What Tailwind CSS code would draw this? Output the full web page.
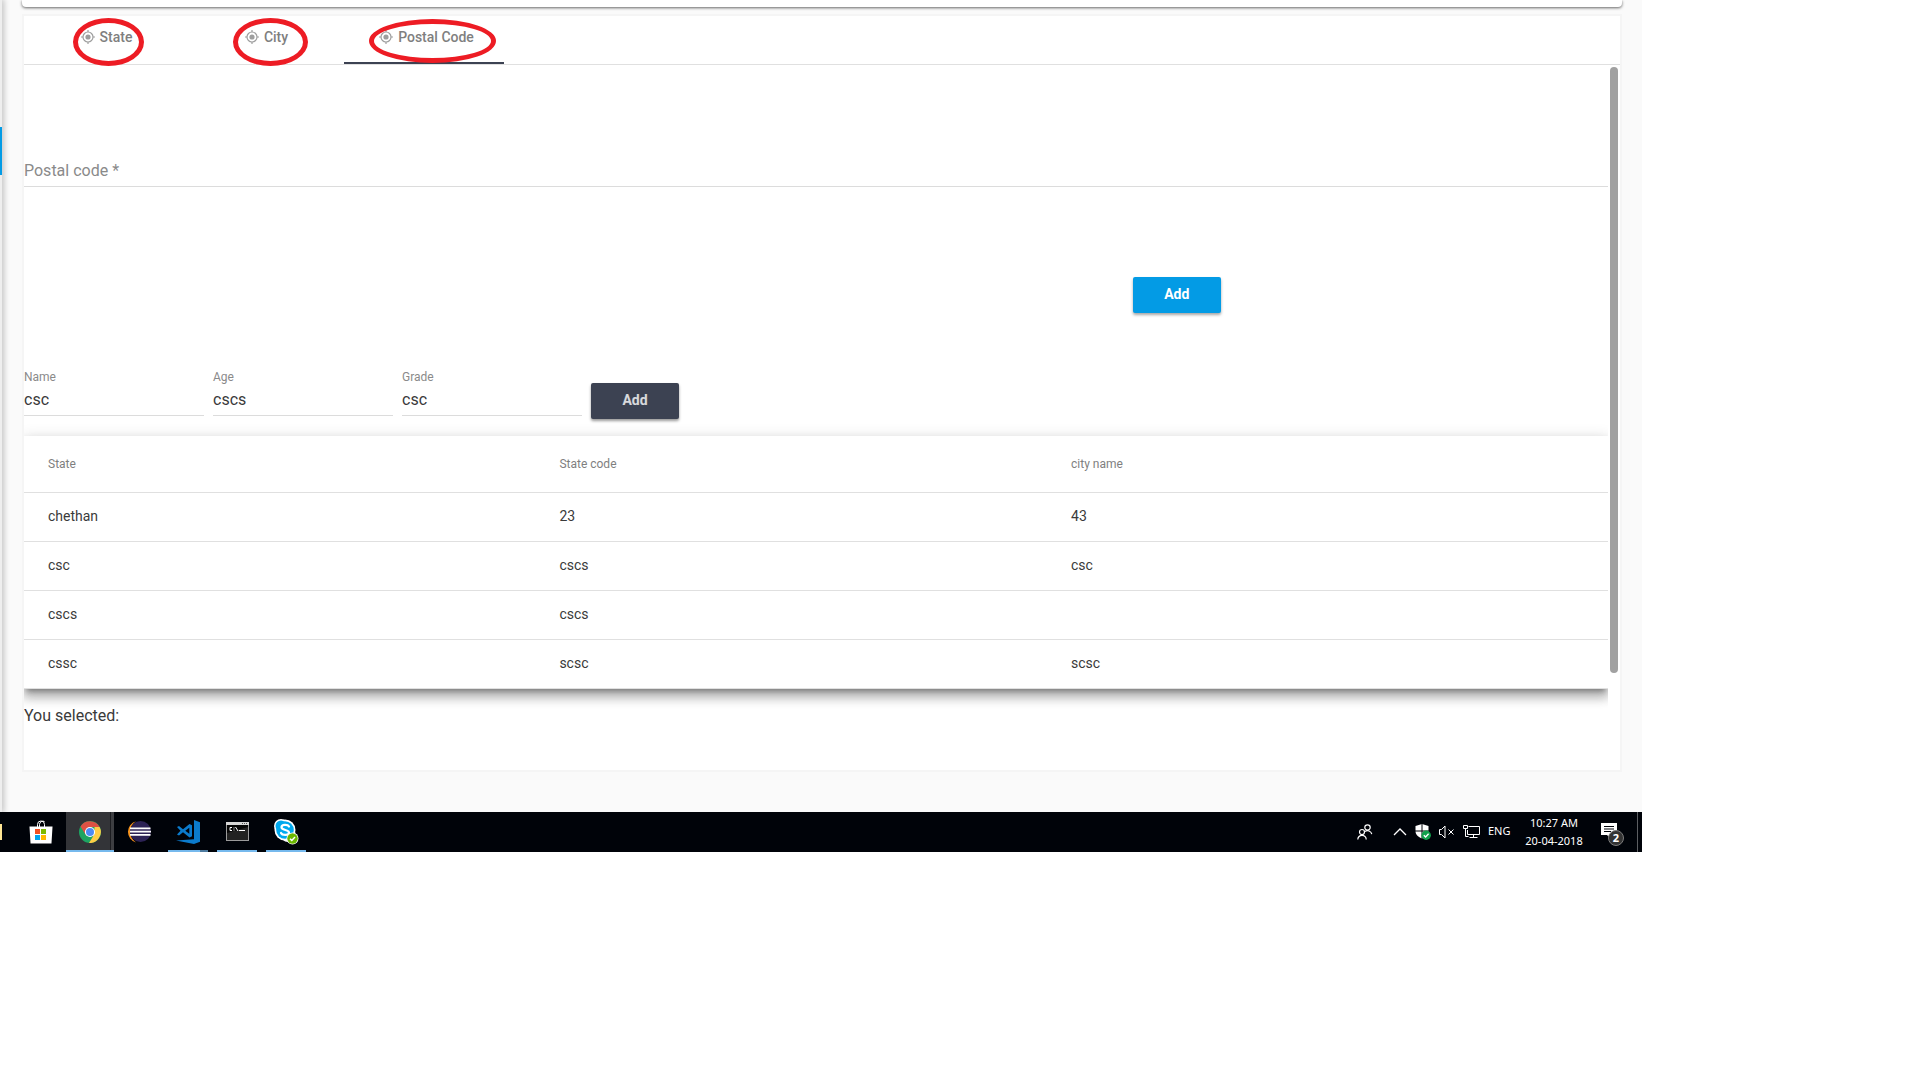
<!DOCTYPE html>
<html lang="en">

<head>
    <meta charset="UTF-8">
    <meta name="viewport" content="width=device-width, initial-scale=1.0">
    <title>Postal Code</title>
    <script src="https://cdn.jsdelivr.net/npm/@tailwindcss/browser@4"></script>
</head>

<body class="bg-white font-['Roboto',sans-serif] text-[#3a3a3a]">

    <div class="w-full max-w-[1642px]">

        <!-- App -->
        <div class="flex bg-[#fafafa] overflow-hidden">

            <!-- Edge of the side nav -->
            <aside class="w-[2px] shrink-0 bg-[#eeeeee] shadow-[0_0_6px_1px_rgba(0,0,0,0.35)] pt-[127px]">
                <div class="h-12 bg-[#039be5]"></div>
            </aside>

            <main class="flex-1 min-w-0 px-5 pb-10">
                <!-- Toolbar card -->
                <div class="h-[7px] bg-white rounded-b-sm shadow-[0_1px_3px_rgba(0,0,0,0.6)]"></div>

                <!-- Tab group -->
                <section class="mt-[7px] border-2 border-[#f5f5f5] bg-white">
                    <nav class="flex border-b border-[#e0e0e0] text-sm font-medium text-[#7f7f7f]" role="tablist">
                        <button role="tab" class="relative w-40 h-12 pl-[5px] pb-[6px] flex items-center justify-center gap-[5px]">
                            <svg class="w-[14px] h-[14px]" viewBox="0 0 14 14" fill="none" stroke="#9e9e9e"><circle cx="7" cy="7" r="5" stroke-width="1.2"/><circle cx="7" cy="7" r="2.6" fill="#9e9e9e" stroke="none"/><path d="M7 0v2M7 12v2M0 7h2M12 7h2" stroke-width="1.2"/></svg>
                            State
                            <span class="absolute left-[49px] top-[2px] w-[71px] h-12 rounded-[50%] border-[5px] border-[#ed1c24]"></span>
                        </button>
                        <button role="tab" class="relative w-40 h-12 pl-[5px] pb-[6px] flex items-center justify-center gap-[5px]">
                            <svg class="w-[14px] h-[14px]" viewBox="0 0 14 14" fill="none" stroke="#9e9e9e"><circle cx="7" cy="7" r="5" stroke-width="1.2"/><circle cx="7" cy="7" r="2.6" fill="#9e9e9e" stroke="none"/><path d="M7 0v2M7 12v2M0 7h2M12 7h2" stroke-width="1.2"/></svg>
                            City
                            <span class="absolute left-[49px] top-[2px] w-[75px] h-12 rounded-[50%] border-[5px] border-[#ed1c24]"></span>
                        </button>
                        <button role="tab" aria-selected="true" class="relative w-40 h-12 pl-[5px] pb-1 flex items-center justify-center gap-[5px] border-b-2 border-[#3c4252]">
                            <svg class="w-[14px] h-[14px]" viewBox="0 0 14 14" fill="none" stroke="#9e9e9e"><circle cx="7" cy="7" r="5" stroke-width="1.2"/><circle cx="7" cy="7" r="2.6" fill="#9e9e9e" stroke="none"/><path d="M7 0v2M7 12v2M0 7h2M12 7h2" stroke-width="1.2"/></svg>
                            Postal Code
                            <span class="absolute left-[25px] top-[3px] w-[127px] h-11 rounded-[50%] border-[5px] border-[#ed1c24]"></span>
                        </button>
                    </nav>

                    <div class="flex">
                        <div class="flex-1 min-w-0 overflow-hidden pt-[90px] pb-[42px]">
                            <input type="text" aria-label="Postal code" placeholder="Postal code *"
                                   class="block w-full h-8 border-b border-[#dcdcdc] text-base placeholder:text-[#8a8a8a] focus:outline-none">

                            <button class="block ml-[70%] mt-[90px] w-[88px] h-9 pb-[2px] rounded-xs bg-[#039be5] text-white text-sm font-bold shadow-[0_2px_3px_rgba(0,0,0,0.35)]">Add</button>

                            <!-- New row form -->
                            <form class="mt-14 flex items-start gap-[9px]">
                                <div class="w-[180px]">
                                    <label for="name" class="block h-4 text-xs text-[#8a8a8a]">Name</label>
                                    <input id="name" type="text" value="csc" class="block w-full h-[31px] pb-[2px] border-b border-[#dcdcdc] text-base focus:outline-none">
                                </div>
                                <div class="w-[180px]">
                                    <label for="age" class="block h-4 text-xs text-[#8a8a8a]">Age</label>
                                    <input id="age" type="text" value="cscs" class="block w-full h-[31px] pb-[2px] border-b border-[#dcdcdc] text-base focus:outline-none">
                                </div>
                                <div class="w-[180px]">
                                    <label for="grade" class="block h-4 text-xs text-[#8a8a8a]">Grade</label>
                                    <input id="grade" type="text" value="csc" class="block w-full h-[31px] pb-[2px] border-b border-[#dcdcdc] text-base focus:outline-none">
                                </div>
                                <button type="button" class="mt-[14px] w-[88px] h-9 pb-[2px] rounded-xs bg-[#3c4252] text-white/80 text-sm font-bold shadow-[0_2px_3px_rgba(0,0,0,0.4)]">Add</button>
                            </form>

                            <!-- Data table -->
                            <div class="mt-[17px] bg-white shadow-[0_5px_5px_-3px_rgba(0,0,0,0.3),0_8px_10px_1px_rgba(0,0,0,0.24),0_3px_14px_2px_rgba(0,0,0,0.12)]">
                                <table class="w-full table-fixed text-left text-sm">
                                    <thead class="text-xs text-[#7f7f7f]">
                                        <tr class="h-14 border-b border-[#e0e0e0]">
                                            <th class="w-[33.8%] pl-6 font-normal">State</th>
                                            <th class="w-[32.3%] font-normal">State code</th>
                                            <th class="font-normal">city name</th>
                                        </tr>
                                    </thead>
                                    <tbody>
                                        <tr class="h-[49px] border-b border-[#e0e0e0]">
                                            <td class="pl-6 pb-[2px]">chethan</td>
                                            <td class="pb-[2px]">23</td>
                                            <td class="pb-[2px]">43</td>
                                        </tr>
                                        <tr class="h-[49px] border-b border-[#e0e0e0]">
                                            <td class="pl-6 pb-[2px]">csc</td>
                                            <td class="pb-[2px]">cscs</td>
                                            <td class="pb-[2px]">csc</td>
                                        </tr>
                                        <tr class="h-[49px] border-b border-[#e0e0e0]">
                                            <td class="pl-6 pb-[2px]">cscs</td>
                                            <td class="pb-[2px]">cscs</td>
                                            <td class="pb-[2px]"></td>
                                        </tr>
                                        <tr class="h-[49px] border-b border-[#e0e0e0]">
                                            <td class="pl-6 pb-[2px]">cssc</td>
                                            <td class="pb-[2px]">scsc</td>
                                            <td class="pb-[2px]">scsc</td>
                                        </tr>
                                    </tbody>
                                </table>
                            </div>

                            <p class="relative mt-[15px] text-base">You selected:</p>
                        </div>

                        <!-- Scrollbar -->
                        <div class="w-3 shrink-0 px-[2px] pt-[2px]">
                            <div class="h-[606px] rounded-full bg-[#a1a1a1]"></div>
                        </div>
                    </div>
                </section>
            </main>
        </div>

        <!-- Taskbar -->
        <footer class="flex h-10 bg-[#000309] text-white">
            <div class="w-4 flex items-center">
                <div class="w-[2px] h-4 bg-[#ffe694]"></div>
            </div>

            <div class="flex gap-px pl-px">
                <!-- Store -->
                <button class="w-12 h-10 pr-px flex items-center justify-center" aria-label="Store">
                    <svg class="w-6 h-6" viewBox="0 0 24 24"><path d="M8.500 7V4.500a3.500 3.500 0 0 1 7 0V7M10.500 7V4.500a3.500 3.500 0 0 1 5-3" fill="none" stroke="#fff" stroke-width="1"/><path d="M0.500 6.500h23l-1 17h-21z" fill="#fff"/><path d="M6 9h5v5H6z" fill="#f25022"/><path d="M12 9h5v5h-5z" fill="#7fba00"/><path d="M6 15h5v5H6z" fill="#00a4ef"/><path d="M12 15h5v5h-5z" fill="#ffb900"/></svg>
                </button>

                <!-- Chrome -->
                <button class="w-12 h-10 flex border-b-2 border-[#76b9ed] bg-[#333438]" aria-label="Chrome">
                    <span class="flex-1 h-full flex items-center justify-center pl-1">
                        <svg class="w-[22px] h-[22px] mt-[2px]" viewBox="0 0 22 22"><circle cx="11" cy="11" r="11" fill="#1da462"/><path d="M20.600 6a11 11 0 0 1-10.600 16l5.200-8.500L15.500 6z" fill="#ffcd46"/><path d="M1.500 5.500A11 11 0 0 1 20.600 6H11l-4.500 7.500z" fill="#dd5144"/><circle cx="11" cy="11" r="5.100" fill="#fff"/><circle cx="11" cy="11" r="4" fill="#4c8bf5"/></svg>
                    </span>
                    <span class="w-1 h-full border-l border-[#1b1c20] bg-[#3d3e42]"></span>
                </button>

                <!-- Eclipse -->
                <button class="w-12 h-10 flex items-center justify-center" aria-label="Eclipse">
                    <svg class="w-6 h-6" viewBox="0 0 24 24"><path d="M9 1.200A11 11 0 0 0 9 22.400 12.500 12.500 0 0 1 9 1.200z" fill="#f7941e"/><circle cx="13.500" cy="11.500" r="10.500" fill="#2c2255"/><path d="M3 7.500h20.500v1.800H3zM3 10.800h21v1.800H3zM3 14h20.500v1.800H3z" fill="#fff"/></svg>
                </button>

                <!-- VS Code -->
                <button class="w-12 h-10 flex flex-col items-center" aria-label="Visual Studio Code">
                    <span class="flex-1 flex items-center">
                        <svg class="w-6 h-6 mt-[2px]" viewBox="0 0 24 24" fill="#0b7bcc"><path d="M18 0l6 2.300v19.400L18 24 0 20.500l18-1.200z"/><path d="M1 7l2-1 4 3.200L13.500 4 16 5.200v11L13.500 17.500 7 12.300 3 15.600 1 14.500l3.500-3.800zM13.300 7.700L9.300 10.800l4 3z" fill-rule="evenodd"/></svg>
                    </span>
                    <span class="flex w-10 h-[2px] bg-[#76b9ed]"><span class="ml-auto w-2 h-[2px] bg-[#4d7b9f]"></span></span>
                </button>

                <!-- Command prompt -->
                <button class="w-12 h-10 flex flex-col items-center" aria-label="Command Prompt">
                    <span class="flex-1 flex items-center">
                        <svg class="w-[23px] h-[19px] mt-[2px]" viewBox="0 0 23 19"><rect x=".5" y=".5" width="22" height="18" fill="#050505" stroke="#9b9b9b"/><path d="M0 0h23v3H0z" fill="#d6d6d6"/><path d="M16 1h1v1h-1zM18 1h1v1h-1zM20 1h1v1h-1z" fill="#555"/><path d="M1 11L22 5v13H1z" fill="#222"/><path d="M6 5.500H4v3h2M8 5.500v1M8 7.500v1M9.500 5l2.500 4M13 8.500h6" fill="none" stroke="#fff" stroke-width="1"/></svg>
                    </span>
                    <span class="w-10 h-[2px] bg-[#76b9ed]"></span>
                </button>

                <!-- Skype -->
                <button class="w-12 h-10 flex flex-col items-center" aria-label="Skype">
                    <span class="flex-1 flex items-center">
                        <svg class="w-[26px] h-[26px] mt-[3px]" viewBox="0 0 26 26"><circle cx="8" cy="7" r="7" fill="#fff"/><circle cx="15" cy="15.500" r="7.500" fill="#fff"/><circle cx="12" cy="11" r="10.500" fill="#fff"/><circle cx="8" cy="7" r="5.500" fill="#00a9ee"/><circle cx="12" cy="11" r="8.800" fill="#00a9ee"/><path d="M16 7.500C15 5.500 8.500 5 8.500 8.300c0 3.400 7.500 1.900 7.500 5.200 0 3.200-6.800 3-8 .5" fill="none" stroke="#fff" stroke-width="2.200" stroke-linecap="round"/><circle cx="19.500" cy="19.500" r="6" fill="#fff"/><circle cx="19.500" cy="19.500" r="5.200" fill="#6bb700"/><path d="M17 19.700l1.800 1.700 3.200-3.300" fill="none" stroke="#fff" stroke-width="1.500"/></svg>
                    </span>
                    <span class="w-10 h-[2px] bg-[#76b9ed]"></span>
                </button>
            </div>

            <!-- System tray -->
            <div class="ml-auto flex items-center gap-2 font-['Noto_Sans',sans-serif] text-[11px]">
                <svg class="w-4 h-4 mr-3" viewBox="0 0 16 16" fill="none" stroke="#fff" stroke-width="1.200"><circle cx="10.500" cy="3.500" r="2.700"/><circle cx="5" cy="8" r="2.500"/><path d="M.8 15.500a4.200 4.200 0 0 1 8.400 0M8 7.400a4.500 4.500 0 0 1 6.800 2.800"/></svg>
                <svg class="w-[14px] h-4" viewBox="0 0 14 16" fill="none" stroke="#fff" stroke-width="1.300"><path d="M1 11l6-6 6 6"/></svg>
                <svg class="w-4 h-4" viewBox="0 0 16 16"><path d="M7 0l6.500 2v5c0 4-3 6-6.500 7.500C3.500 13 .5 11 .5 7V2z" fill="#fff"/><path d="M7 0v15M0 7h14" stroke="#000309" stroke-width="1"/><circle cx="11.200" cy="11.200" r="4.700" fill="#10a04b"/><path d="M8.800 11.200l1.800 1.800 3-3.200" fill="none" stroke="#fff" stroke-width="1.300"/></svg>
                <svg class="w-4 h-4" viewBox="0 0 16 16" fill="none" stroke="#fff" stroke-width="1"><path d="M.5 5.500h2l3.500-3.500v12l-3.500-3.500h-2zM9.500 5.500l5 5M14.500 5.500l-5 5"/></svg>
                <svg class="w-[17px] h-4" viewBox="0 0 17 16" fill="none" stroke="#fff" stroke-width="1"><path d="M5.500 2.500h11v8h-12V6M10.500 10.500v3M6.500 13.500h8M.5 1.500h4v3h-4zM2.500 4.500v8h3"/></svg>
                <span class="w-6">ENG</span>
                <time class="w-[62px] ml-[3px] text-center leading-[18px]">10:27 AM<br>20-04-2018</time>
                <button class="relative ml-2 mr-[19px]" aria-label="Notifications">
                    <svg class="w-[17px] h-[17px]" viewBox="0 0 17 17"><path d="M0 0h16v12h-6v4l-4-4H0z" fill="#fff"/><path d="M3 3.500h10M3 6h10M3 8.500h7" stroke="#000309" stroke-width="1"/></svg>
                    <span class="absolute left-[7px] top-[7px] w-4 h-4 rounded-full border border-[#7d7d7d] bg-[#333333] text-[11px] leading-[14px] font-bold">2</span>
                </button>
            </div>
            <div class="w-[5px] border-l border-[#5c5e62]"></div>
        </footer>
    </div>

</body>

</html>
